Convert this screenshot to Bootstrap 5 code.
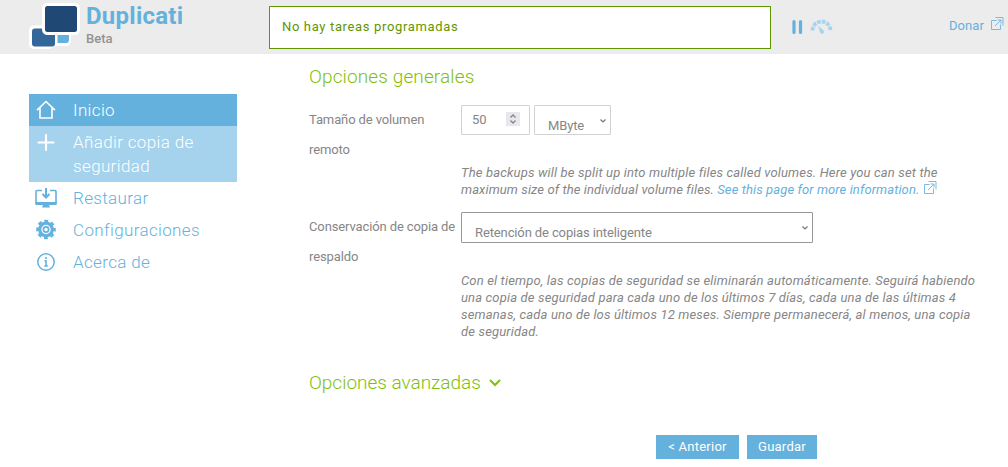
<!DOCTYPE html>
<html lang="es">
<head>
<meta charset="utf-8">
<meta name="viewport" content="width=device-width, initial-scale=1">
<title>Duplicati</title>
<link href="https://cdn.jsdelivr.net/npm/bootstrap@5.3.0/dist/css/bootstrap.min.css" rel="stylesheet">
<style>
body{font-family:Roboto,"Noto Sans",sans-serif;font-size:13px;line-height:17px;color:#868686;letter-spacing:-.12px;height:467px;overflow:hidden}
svg{display:block;flex:none}
a{color:#65b1dd;text-decoration:none}
.topbar{height:54px;background:#ececec;padding-left:29px}
.logo-text{margin:2px 0 0 6px;width:183px}
.logo-name{font-size:24px;line-height:28px;font-weight:700;color:#65b1dd;letter-spacing:.25px}
.logo-sub{font-size:13px;line-height:17px;font-weight:500;letter-spacing:0;color:#929292}
.status{width:502px;height:43px;margin-top:6px;border:1px solid #5f9700;background:#fff;color:#5f9700;padding:0 12px;line-height:40px;letter-spacing:.65px}
.ctl{margin:19px 0 0 20px;gap:6px}
.donate{margin:17px 4px 0 auto;gap:6px;letter-spacing:.1px}
.sidebar{width:208px;margin:40px 0 0 29px}
.sidebar a{display:flex;font-size:17px;line-height:24px;padding:4px 30px 4px 6px;gap:16px;letter-spacing:.36px;font-weight:300}
.sidebar a svg{margin-left:-1px}
.sidebar .on{background:#65b1dd;color:#fff}
.sidebar .hov{background:#a5d2ec;color:#fff}
.content-col{margin-left:72px;width:672px;padding-top:10px}
h2{font-size:19px;line-height:26px;font-weight:300;color:#7fbf0c;letter-spacing:.12px;margin:0}
.adv{letter-spacing:-.02px;margin-top:30px;gap:8px}
.opt-label{width:152px;line-height:29.500px;white-space:nowrap}
.box{border:1px solid #d2d2d4;border-radius:1px;height:30px;background:#fff}
.num{width:69px;padding:6px 9px 0 10px}
.num span{margin-top:-1px}
.unit{width:77px;margin-left:4px}
.sel{display:flex;justify-content:space-between;padding:11px 3px 0 13px}
.sel svg{margin-top:1px}
.policy{width:352px;height:31px;border-color:#97979a}
.hint{font-style:italic;white-space:nowrap;margin-left:152px;letter-spacing:.16px}
.hint svg{display:inline-block;margin-left:0;vertical-align:-1px}
.act{background:#65b1dd;color:#fff;height:24px;line-height:24px;border:0;padding:0;border-radius:0;font-size:13px;letter-spacing:.25px}
</style>
</head>
<body>
<header class="topbar d-flex">
  <svg width="51" height="54" viewBox="0 0 51 54">
    <g fill="#fff"><rect x="0" y="25.500" width="25" height="23.500" rx="5"/><rect x="20" y="26" width="12" height="20" rx="4"/></g>
    <rect x="3" y="28.500" width="23" height="18" rx="3" fill="#346799"/>
    <path d="M26 32h16v8q0 6-5 6H26z" fill="#fff"/>
    <path d="M28.500 34H40v5.500q0 3.500-3 3.500h-8.500z" fill="#65b1dd"/>
    <rect x="14.500" y="4.500" width="35" height="29" rx="4" fill="#1f4875" stroke="#fff" stroke-width="3"/>
  </svg>
  <div class="logo-text"><div class="logo-name">Duplicati</div><div class="logo-sub">Beta</div></div>
  <div class="status">No hay tareas programadas</div>
  <div class="ctl d-flex">
    <svg width="13" height="16" viewBox="0 0 13 16"><path d="M3 2.500v11M9.500 2.500v11" stroke="#65b1dd" stroke-width="3.200" stroke-linecap="round"/></svg>
    <svg width="23" height="16" viewBox="0 0 23 16"><path d="M2.500 11.500A9 9 0 0 1 20.500 11.500" fill="none" stroke="#a9d3ec" stroke-width="3.800" stroke-dasharray="3.700 1.100"/><path d="M8 6.500l5 4.500a2 2 0 1 1-3 2z" fill="#a9d3ec"/></svg>
  </div>
  <a href="#" class="donate d-flex">Donar
    <svg width="14" height="14" viewBox="0 0 14 14" fill="none" stroke="#79bbe1"><path d="M6.500 3.500h-5v9h9v-5M5 9l6-6M3.500 1.500h0M5.500.5h7.500v8M7.500 3h3.500v3.500"/></svg>
  </a>
</header>
<div class="d-flex">
  <nav class="sidebar">
    <a href="#" class="on"><svg width="23" height="24" viewBox="0 0 23 24" fill="none" stroke="#fff" stroke-width="1.600"><path d="M3 12.200l9-8.700 9 8.700M6 10v10h12V10"/></svg>Inicio</a>
    <a href="#" class="hov"><svg width="23" height="24" viewBox="0 0 23 24" stroke="#fff" stroke-width="2.200" stroke-linecap="round"><path d="M4.500 12.500h15M12 5v15"/></svg><span>Añadir copia de<br>seguridad</span></a>
    <a href="#"><svg width="23" height="24" viewBox="0 0 23 24" fill="none" stroke="#65b1dd"><path d="M8 4.500H3Q2 4.500 2 5.500V17M16 4.500h5Q22 4.500 22 5.500V17" stroke-width="1.600"/><path d="M1.200 16h21.600v2q0 1-1 1H15l1 2.500H8L9 19H2.200q-1 0-1-1z" fill="#65b1dd" stroke="none"/><path d="M12 2v9M8.500 8l3.500 3.500L15.500 8" stroke-width="2"/></svg>Restaurar</a>
    <a href="#"><svg width="23" height="24" viewBox="0 0 23 24" fill="none" stroke="#65b1dd"><circle cx="12" cy="11.500" r="6.300" stroke-width="3.200"/><circle cx="12" cy="11.500" r="8.500" stroke-width="2.600" stroke-dasharray="3.800 2.876" stroke-dashoffset="1.900"/><circle cx="12" cy="11.500" r="2.600" stroke-width="1.700"/></svg>Configuraciones</a>
    <a href="#"><svg width="23" height="24" viewBox="0 0 23 24" fill="none" stroke="#65b1dd"><circle cx="12" cy="12" r="8.200" stroke-width="1.500"/><path d="M12 7v2M10.500 10.800H12V16M10.300 16h3.500" stroke-width="1.600"/></svg>Acerca de</a>
  </nav>
  <main class="content-col">
    <h2>Opciones generales</h2>
    <div class="d-flex mt-3">
      <div class="opt-label" style="margin-top:-1px">Tamaño de volumen<br>remoto</div>
      <div class="d-flex" style="margin-top:-1px">
      <div class="box num d-flex justify-content-between"><span>50</span>
        <svg width="14" height="14" viewBox="0 0 14 14"><path fill="#e8e8ec" d="M0 0h14v14H0z"/><path d="M4.500 5.500L7 3l2.500 2.500M4.500 8.500L7 11l2.500-2.500" fill="none" stroke="#858589" stroke-width="1.300"/></svg>
      </div>
      <div class="box sel unit">MByte
        <svg width="8" height="6" viewBox="0 0 8 6"><path d="M1.500 1.500L4 4l2.500-2.500" fill="none" stroke="#777" stroke-width="1.200"/></svg>
      </div>
      </div>
    </div>
    <div class="hint" style="margin-bottom:14px">The backups will be split up into multiple files called volumes. Here you can set the<br><span style="letter-spacing:.1px">maximum size of the individual volume files. <a href="#">See this page for more information. <svg width="14" height="14" viewBox="0 0 14 14" fill="none" stroke="#79bbe1"><path d="M6.500 3.500h-5v9h9v-5M5 9l6-6M5.500.5h7.500v8M7.500 3h3.500v3.500"/></svg></a></span></div>
    <div class="d-flex">
      <div class="opt-label">Conservación de copia de<br>respaldo</div>
      <div class="box sel policy">Retención de copias inteligente
        <svg width="8" height="6" viewBox="0 0 8 6"><path d="M1.500 1.500L4 4l2.500-2.500" fill="none" stroke="#777" stroke-width="1.200"/></svg>
      </div>
    </div>
    <div class="hint" style="margin-top:1px">Con el tiempo, las copias de seguridad se eliminarán automáticamente. Seguirá habiendo<br>una copia de seguridad para cada uno de los últimos 7 días, cada una de las últimas 4<br>semanas, cada uno de los últimos 12 meses. Siempre permanecerá, al menos, una copia<br>de seguridad.</div>
    <h2 class="adv d-flex align-items-center">Opciones avanzadas
      <svg width="12" height="8" viewBox="0 0 12 8"><path d="M1.500 1.500L6 6l4.500-4.500" fill="none" stroke="#7fbf0c" stroke-width="2" stroke-linecap="round"/></svg>
    </h2>
    <div class="d-flex gap-2" style="margin:39px 0 0 347px">
      <button class="act" style="width:83px">&lt; Anterior</button>
      <button class="act" style="width:70px">Guardar</button>
    </div>
  </main>
</div>
<script src="https://cdn.jsdelivr.net/npm/bootstrap@5.3.0/dist/js/bootstrap.bundle.min.js"></script>
</body>
</html>
